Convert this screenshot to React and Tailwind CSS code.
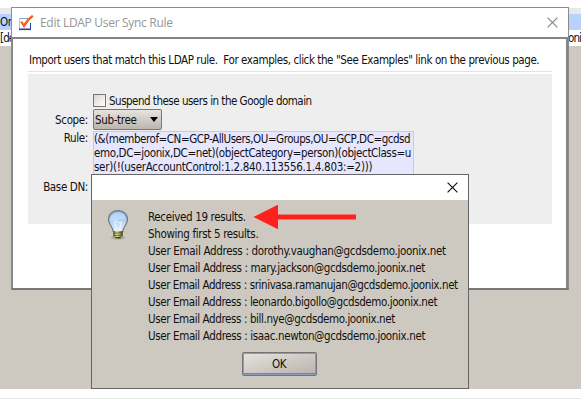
import React from "react";

const results = [
  ["Received 19 results.", "tracking-[-0.35px]"],
  ["Showing first 5 results.", "tracking-[-0.34px]"],
  ["User Email Address : dorothy.vaughan@gcdsdemo.joonix.net", "tracking-[-0.31px]"],
  ["User Email Address : mary.jackson@gcdsdemo.joonix.net", "tracking-[-0.36px]"],
  ["User Email Address : srinivasa.ramanujan@gcdsdemo.joonix.net", "tracking-[-0.4px]"],
  ["User Email Address : leonardo.bigollo@gcdsdemo.joonix.net", "tracking-[-0.39px]"],
  ["User Email Address : bill.nye@gcdsdemo.joonix.net", "tracking-[-0.39px]"],
  ["User Email Address : isaac.newton@gcdsdemo.joonix.net", "tracking-[-0.37px]"],
];

function CheckLogo() {
  return (
    <svg className="h-4 w-4" viewBox="0 0 16 16" fill="none">
      <path d="M1 3.5H11" stroke="#8c9fd0" />
      <path d="M1.500 3V14.500" stroke="#b9c3de" />
      <path d="M12.500 8V14.500" stroke="#2b409c" />
      <path d="M1 14.300H13" stroke="#2b409c" strokeWidth="1.600" />
      <path d="M3.200 6.500L6 11Q9 5 14.800 0.800" stroke="#f26322" strokeWidth="2.300" />
    </svg>
  );
}

function CloseIcon({ color }) {
  return (
    <svg className="h-[11px] w-[11px]" viewBox="0 0 11 11" fill="none">
      <path d="M0.6 0.6L10.4 10.4M10.4 0.6L0.6 10.4" stroke={color} strokeWidth="1.15" />
    </svg>
  );
}

function Bulb() {
  return (
    <svg className="h-[32px] w-[24px]" viewBox="0 0 24 32">
      <defs>
        <linearGradient id="glass" x1="0" y1="0" x2="0" y2="1">
          <stop offset="0" stopColor="#80aee3" />
          <stop offset="0.5" stopColor="#b3d3f5" />
          <stop offset="1" stopColor="#e9eff5" />
        </linearGradient>
        <linearGradient id="brass" x1="0" y1="0" x2="1" y2="0">
          <stop offset="0" stopColor="#5c5b24" />
          <stop offset="0.4" stopColor="#e8e79a" />
          <stop offset="1" stopColor="#4d4b1e" />
        </linearGradient>
      </defs>
      <ellipse cx="12" cy="28.7" rx="7" ry="1.8" fill="#77736c" opacity="0.4" />
      <path
        d="M12 1.6C6.3 1.6 2.5 5.5 2.5 10.6C2.5 15.5 6.7 17.2 7.2 22.5H16.8C17.3 17.2 21.5 15.5 21.5 10.6C21.5 5.5 17.7 1.6 12 1.6Z"
        fill="url(#glass)"
        stroke="#70747c"
        strokeWidth="1.2"
      />
      <path d="M4.5 11C4.5 6 8 3.5 12 3.5S19.5 6 19.5 10C15 9 10 13 4.5 11Z" fill="#d9eaff" opacity="0.55" />
      <path d="M8.5 13L10.5 20.5M15.5 13L13.5 20.5M8.5 13L11 12L12.5 14L15.5 13" stroke="#fff" fill="none" opacity="0.8" />
      <path d="M7.2 22H16.8V27L14.5 29.3H9.5L7.2 27Z" fill="url(#brass)" />
      <path d="M7.2 24.3L16.8 23.5M7.2 26.7L16.8 25.9" stroke="#4b491f" strokeWidth="0.7" />
      <path d="M9.5 28.7H14.5" stroke="#303026" strokeWidth="1.3" />
    </svg>
  );
}

function Arrow() {
  return (
    <svg className="h-[26px] w-[104px]" viewBox="0 0 104 26">
      <path d="M0.5 12L25 -0.3V9.6H103V14.5H25V24.3Z" fill="#ff211e" />
    </svg>
  );
}

function RuleWindow() {
  return (
    <section className="absolute left-[11px] top-[7px] flex h-[283px] w-[558px] flex-col border border-[#8c8c8c] border-b-2 border-b-[#777] bg-white">
      <header className="flex h-[31px] shrink-0 items-center border-b-2 border-[#858585] pl-[6px] pr-[10px]">
        <CheckLogo />
        <h1 className="ml-[6px] flex-1 whitespace-nowrap font-['Open_Sans',sans-serif] text-[12px] leading-4 tracking-[-0.3px] text-[#969696] [font-stretch:normal]">
          Edit LDAP User Sync Rule
        </h1>
        <CloseIcon color="#858585" />
      </header>
      <div className="flex-1 border-r-2 border-l border-[#858585] pl-[15px] pr-[14px] pt-[13px]">
        <p className="h-[19px] whitespace-nowrap pl-px leading-4 tracking-[-0.415px]">
          Import users that match this LDAP rule.&nbsp; For examples, click the "See Examples" link on the previous page.
        </p>
        <div className="h-[3px] border-t border-[#e2e2e2]" />
        <div className="flex h-[150px] flex-col bg-[#eee] pt-[18px]">
          <label className="flex h-[17px] items-center pl-[65px]">
            <span className="h-[13px] w-[13px] shrink-0 border border-[#777] bg-gradient-to-br from-[#d9d6d0] to-white" />
            <span className="ml-[3px] whitespace-nowrap leading-4 tracking-[-0.5px]">Suspend these users in the Google domain</span>
          </label>
          <div className="flex items-center">
            <span className="w-[60px] text-right">Scope:</span>
            <div className="ml-[5px] flex h-[21px] w-[69px] items-center justify-between rounded-[2px] border border-[#777] bg-gradient-to-b from-[#e7e4df] to-[#bbb5ac] pl-[1px] pr-[3px]">
              <span>Sub-tree</span>
              <span className="border-x-[4.5px] border-t-[5px] border-x-transparent border-t-black" />
            </div>
          </div>
          <div className="flex">
            <span className="w-[60px] text-right">Rule:</span>
            <div className="ml-[5px] mt-[1px] h-[48px] w-[321px] whitespace-nowrap border border-[#cacada] bg-[#e6e6ff] leading-[14px]">
              <p className="tracking-[-0.45px]">(&amp;(memberof=CN=GCP-AllUsers,OU=Groups,OU=GCP,DC=gcdsd</p>
              <p className="tracking-[-0.38px]">emo,DC=joonix,DC=net)(objectCategory=person)(objectClass=u</p>
              <p className="tracking-[-0.28px]">ser)(!(userAccountControl:1.2.840.113556.1.4.803:=2)))</p>
            </div>
          </div>
          <span className="w-[60px] whitespace-nowrap text-right">Base DN:</span>
        </div>
      </div>
    </section>
  );
}

function ResultDialog() {
  return (
    <section className="absolute left-[91px] top-[174px] flex h-[215px] w-[378px] flex-col border border-[#656565] bg-[#cdc8c0]">
      <header className="flex h-[25px] shrink-0 items-center justify-end bg-white pr-[10px]">
        <CloseIcon color="#111" />
      </header>
      <div className="flex pl-[14px] pt-[9px]">
        <Bulb />
        <ul className="ml-[18px]">
          {results.map(([text, tracking], i) => (
            <li key={text} className={`relative h-[17px] whitespace-nowrap leading-[17px] ${tracking}`}>
              {text}
              {i === 0 && (
                <span className="absolute left-[105px] top-[-4px]">
                  <Arrow />
                </span>
              )}
            </li>
          ))}
        </ul>
      </div>
      <button className="ml-[150px] mt-[7px] flex h-[24px] w-[75px] items-center justify-center rounded-[2px] border border-[#747474] bg-gradient-to-br from-[#e7e3de] to-[#b8b2aa] pr-px tracking-[-0.4px] shadow-[inset_0_0_0_1px_#8b9dbe,inset_0_-2px_0_#6f86b2]">
        OK
      </button>
    </section>
  );
}

export default function App() {
  return (
    <main className="relative h-[400px] w-[581px] overflow-hidden bg-white font-['DejaVu_Sans_Condensed','DejaVu_Sans',sans-serif] text-[11.5px] leading-4 tracking-[-0.35px] text-[#101010] [font-stretch:condensed]">
      <div className="flex h-[389px] flex-col bg-[#cdc8c0]">
        <div className="h-[8px] bg-white" />
        <div className="h-[6px] bg-[#e9e9e9]" />
        <div className="flex h-[16px] items-center bg-[#b8d1fe] leading-4">Or</div>
        <div className="flex h-[16px] items-center justify-between bg-white tracking-[-0.9px]">
          <span>[de</span>
          <span className="w-[13px] whitespace-nowrap">oni</span>
        </div>
      </div>
      <div className="mt-[9px] h-px bg-[#e6e6e6]" />
      <RuleWindow />
      <ResultDialog />
    </main>
  );
}
